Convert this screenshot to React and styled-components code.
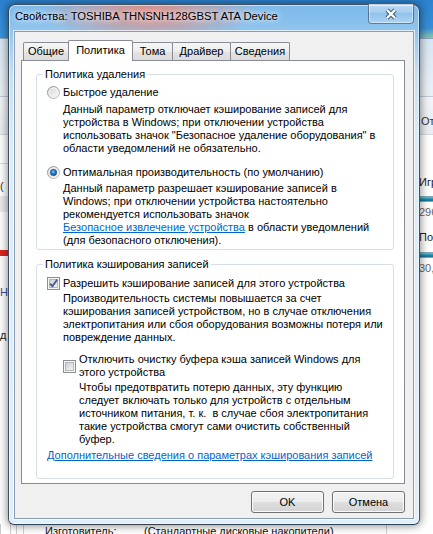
import { useId } from "react";
import styled, { createGlobalStyle } from "styled-components";

const GlobalStyle = createGlobalStyle`
  * { box-sizing: border-box; }
  html, body { margin: 0; padding: 0; background: #fff; }
  body {
    font-family: "Liberation Sans", Arial, sans-serif;
    font-size: 11px;
    color: #000;
    overflow: hidden;
  }
`;

const Desktop = styled.div`
  position: relative;
  width: 433px;
  height: 534px;
  overflow: hidden;
  background: #fff;
`;

/* ---------- window behind the dialog ---------- */

const BackWindow = styled.div`
  position: absolute;
  inset: 0;
  display: flex;
  flex-direction: column;
  background: #fff;
`;

const BackSky = styled.div`
  height: 38px;
  background:
    radial-gradient(ellipse 30px 10px at 100% 100%, #8cc7a4, rgba(140, 199, 164, 0)),
    linear-gradient(#2b82cf, #3b93da);
`;

const BackToolbar = styled.div`
  height: 59px;
  border-top: 1px solid #8aa6bf;
  border-bottom: 1px solid #c2cbd5;
  background: linear-gradient(#d6e6f2, #e4edf5 60%, #eaf0f6);
`;

const BackHeader = styled.div`
  height: 38px;
  border-bottom: 1px solid #d3d8de;
  background: linear-gradient(#f3f5f7, #e9edf1);
  padding: 18px 0 0 421px;
  color: #333;
`;

const BackBody = styled.div`
  flex: 1;
  position: relative;
`;

const SideList = styled.div`
  position: absolute;
  left: 419px;
  top: 41px;
  width: 40px;
  display: flex;
  flex-direction: column;
  line-height: 13px;
  color: #222;
`;

const SideText = styled.div`
  margin-top: ${(p) => p.$mt || 0}px;
  white-space: nowrap;
  color: ${(p) => (p.$muted ? "#666" : "#222")};
`;

const SideBar = styled.div`
  margin: ${(p) => p.$mt}px 0 0 -6px;
  height: 6px;
  border: 1px solid #7fa9b8;
  background: linear-gradient(#5fc0d6, #1d87a6 60%, #18708b);
`;

const LeftMarks = styled.div`
  position: absolute;
  left: 0;
  top: 28px;
  width: 8px;
  display: flex;
  flex-direction: column;
`;

const LeftLine = styled.div`
  margin-top: ${(p) => p.$mt}px;
  height: ${(p) => p.$h || 1}px;
  background: ${(p) => p.$c};
`;

const LeftChar = styled.div`
  margin-top: ${(p) => p.$mt}px;
  line-height: 13px;
  color: ${(p) => p.$c};
`;

const BackFooter = styled.div`
  position: absolute;
  left: 0;
  right: 0;
  bottom: 0;
  height: 10px;
  display: flex;
  align-items: flex-start;
  border-left: 1px solid #c9c9c9;
`;

const FooterRule = styled.div`
  width: ${(p) => p.$w}px;
  height: 10px;
  flex: none;
  border-right: 1px solid #cfcfcf;
`;

const FooterText = styled.div`
  width: ${(p) => p.$w}px;
  flex: none;
  padding: 1px 0 0 ${(p) => p.$pl || 0}px;
  line-height: 13px;
  white-space: nowrap;
  color: #111;
`;

/* ---------- dialog frame ---------- */

const Dialog = styled.div`
  position: absolute;
  left: 8px;
  top: 4px;
  width: 412px;
  height: 521px;
  display: flex;
  flex-direction: column;
  border: 1px solid rgba(22, 34, 50, 0.78);
  border-radius: 7px 7px 6px 6px;
  background:
    radial-gradient(ellipse 110px 28px at 140px 8px, rgba(234, 132, 114, 0.95), rgba(234, 132, 114, 0)),
    linear-gradient(180deg, #7cb9ea 0px, #90c5ee 26px, #c6e1f6 70px, #dbecf9 140px, #e1effa 100%);
  box-shadow:
    inset 0 0 0 1px rgba(255, 255, 255, 0.55),
    0 0 8px 1px rgba(0, 0, 0, 0.45);
`;

const TitleBar = styled.div`
  height: 26px;
  flex: none;
  display: flex;
  align-items: flex-start;
  justify-content: space-between;
  padding: 0 5px 0 6px;
`;

const Title = styled.div`
  padding-top: 5px;
  font-size: 11.25px;
  line-height: 13px;
  white-space: nowrap;
  text-shadow: 0 0 5px #fff, 0 0 9px rgba(255, 255, 255, 0.9);
`;

const CloseButton = styled.div`
  width: 46px;
  height: 20px;
  margin-top: -1px;
  display: flex;
  align-items: center;
  justify-content: center;
  border: 1px solid rgba(38, 58, 84, 0.6);
  border-top: none;
  border-radius: 0 0 4px 4px;
  background: linear-gradient(
    rgba(255, 255, 255, 0.5),
    rgba(255, 255, 255, 0.25) 50%,
    rgba(255, 255, 255, 0.1) 50%,
    rgba(255, 255, 255, 0.3)
  );
  box-shadow: inset 0 0 0 1px rgba(255, 255, 255, 0.45);
`;

const Client = styled.div`
  flex: 1;
  margin: 0 5px 5px;
  display: flex;
  flex-direction: column;
  padding: 8px 8px 0 6px;
  background: #f0f0f0;
  border: 1px solid #8b9db2;
  box-shadow: 0 0 0 1px rgba(255, 255, 255, 0.7);
`;

/* ---------- tabs ---------- */

const TabStrip = styled.div`
  height: 20px;
  flex: none;
  display: flex;
  align-items: flex-end;
  padding-left: 2px;
`;

const Tab = styled.div`
  position: relative;
  z-index: ${(p) => (p.$active ? 2 : 1)};
  width: ${(p) => p.$w}px;
  height: ${(p) => (p.$active ? 21 : 18)}px;
  margin-bottom: ${(p) => (p.$active ? -1 : 0)}px;
  display: flex;
  align-items: center;
  justify-content: center;
  padding-bottom: ${(p) => (p.$active ? 1 : 0)}px;
  line-height: 13px;
  white-space: nowrap;
  border: 1px solid #898c95;
  border-bottom: none;
  border-radius: 2px 2px 0 0;
  background: ${(p) =>
    p.$active
      ? "#fff"
      : "linear-gradient(#f6f6f6, #ededed 50%, #e3e3e3 50%, #dcdcdc)"};

  & + & {
    margin-left: -1px;
  }
`;

const Panel = styled.div`
  height: 424px;
  flex: none;
  display: flex;
  flex-direction: column;
  padding: 0 10px 0 14px;
  background: #fff;
  border: 1px solid #898c95;
`;

/* ---------- group boxes ---------- */

const GroupBox = styled.fieldset`
  margin: ${(p) => p.$mt}px 0 0;
  padding: 0;
  min-width: 0;
  border: 1px solid #d5dfe5;
  border-radius: 3px;
`;

const Legend = styled.legend`
  margin-left: 6px;
  padding: 0 2px;
  line-height: 13px;
`;

const GroupBody = styled.div`
  display: flex;
  flex-direction: column;
  padding: ${(p) => p.$pt}px 8px ${(p) => p.$pb}px 10px;
  line-height: 13px;
`;

const Option = styled.div`
  display: flex;
  align-items: ${(p) => (p.$multi ? "center" : "flex-start")};
  gap: 3px;
  margin: ${(p) => p.$mt || 0}px 0 0 ${(p) => p.$indent || 0}px;
`;

const Control = styled.svg`
  flex: none;
  display: block;
`;

const Description = styled.div`
  margin-top: ${(p) => p.$mt}px;
  padding-left: ${(p) => p.$indent}px;
`;

const Line = styled.div`
  white-space: pre;
`;

const Link = styled.span`
  color: #0066cc;
  text-decoration: underline;
  cursor: pointer;
`;

const LinkRow = styled.div`
  margin-top: ${(p) => p.$mt}px;
  white-space: nowrap;
`;

/* ---------- buttons ---------- */

const ButtonRow = styled.div`
  display: flex;
  justify-content: flex-end;
  gap: 8px;
  margin-top: 7px;
`;

const Button = styled.button`
  width: 73px;
  height: 22px;
  padding: 0;
  font: inherit;
  color: #000;
  border: 1px solid #707070;
  border-radius: 3px;
  background: linear-gradient(#f3f3f3, #ececec 50%, #dfdfdf 50%, #d3d3d3);
  box-shadow: inset 0 0 0 1px #fbfbfb;
`;

function Radio({ checked }) {
  const id = useId().replace(/:/g, "");
  return (
    <Control width="13" height="13" viewBox="0 0 13 13">
      <defs>
        <linearGradient id={`ring${id}`} x1="0" y1="0" x2="1" y2="1">
          <stop offset="0" stopColor="#8b8b8b" />
          <stop offset="1" stopColor="#c4c4c4" />
        </linearGradient>
        <linearGradient id={`fill${id}`} x1="0" y1="0" x2="1" y2="1">
          <stop offset="0" stopColor="#d4d4d4" />
          <stop offset="1" stopColor="#fcfcfc" />
        </linearGradient>
        <radialGradient id={`dot${id}`} cx="0.45" cy="0.4" r="0.65">
          <stop offset="0" stopColor="#7ed2f5" />
          <stop offset="0.45" stopColor="#2a7fc8" />
          <stop offset="1" stopColor="#123f78" />
        </radialGradient>
      </defs>
      <circle cx="6.5" cy="6.5" r="6" fill={`url(#fill${id})`} stroke={`url(#ring${id})`} />
      <circle cx="6.5" cy="6.5" r="4.5" fill="none" stroke="#f4f4f4" strokeWidth="1" />
      {checked && (
        <circle cx="6.5" cy="6.5" r="3.2" fill={`url(#dot${id})`} stroke="#1c4c86" strokeWidth="0.6" />
      )}
    </Control>
  );
}

function CheckBox({ checked }) {
  const id = useId().replace(/:/g, "");
  return (
    <Control width="13" height="13" viewBox="0 0 13 13">
      <defs>
        <linearGradient id={`cb${id}`} x1="0" y1="0" x2="1" y2="1">
          <stop offset="0" stopColor="#c9cdd2" />
          <stop offset="1" stopColor="#f7f7f7" />
        </linearGradient>
      </defs>
      <rect x="0.5" y="0.5" width="12" height="12" fill="#f6f6f6" stroke="#8e8f8f" />
      <rect x="2.5" y="2.5" width="8" height="8" fill={`url(#cb${id})`} stroke="#b4b8bd" />
      {checked && (
        <path d="M3 6.6 L5.4 9.2 L10.2 2.6" fill="none" stroke="#4a5d92" strokeWidth="1.9" />
      )}
    </Control>
  );
}

function CloseGlyph() {
  return (
    <svg width="14" height="12" viewBox="0 0 14 12">
      <path d="M3 2 L11 10 M11 2 L3 10" stroke="rgba(40,52,66,0.75)" strokeWidth="4.4" />
      <path d="M3 2 L11 10 M11 2 L3 10" stroke="#fff" strokeWidth="2.4" />
    </svg>
  );
}

const tabs = [
  { name: "Общие", w: 46 },
  { name: "Политика", w: 65, active: true },
  { name: "Тома", w: 41 },
  { name: "Драйвер", w: 59 },
  { name: "Сведения", w: 60 },
];

const quickLines = [
  "Данный параметр отключает кэширование записей для",
  "устройства в Windows; при отключении устройства",
  'использовать значок "Безопасное удаление оборудования" в',
  "области уведомлений не обязательно.",
];

const cacheLines = [
  "Производительность системы повышается за счет",
  "кэширования записей устройством, но в случае отключения",
  "электропитания или сбоя оборудования возможны потеря или",
  "повреждение данных.",
];

const flushLines = [
  "Чтобы предотвратить потерю данных, эту функцию",
  "следует включать только для устройств с отдельным",
  "источником питания, т. к.  в случае сбоя электропитания",
  "такие устройства смогут сами очистить собственный",
  "буфер.",
];

export default function App() {
  return (
    <Desktop>
      <GlobalStyle />

      <BackWindow>
        <BackSky />
        <BackToolbar />
        <BackHeader>От</BackHeader>
        <BackBody>
          <SideList>
            <SideText>Игр</SideText>
            <SideBar $mt={7} />
            <SideText $mt={4} $muted>296</SideText>
            <SideText $mt={12}>По</SideText>
            <SideBar $mt={8} />
            <SideText $mt={4} $muted>30,9</SideText>
          </SideList>
          <LeftMarks>
            <LeftLine $mt={0} $c="#dcdcdc" />
            <LeftChar $mt={16} $c="#333">(</LeftChar>
            <LeftLine $mt={3} $h={16} $c="#ececec" />
            <LeftLine $mt={38} $h={6} $c="#e0231f" />
            <LeftChar $mt={30} $c="#2a4fa8">Н</LeftChar>
            <LeftChar $mt={30} $c="#222">д</LeftChar>
          </LeftMarks>
          <BackFooter>
            <FooterRule $w={10} />
            <FooterRule $w={6} />
            <FooterRule $w={7} />
            <FooterText $w={120} $pl={21}>Изготовитель:</FooterText>
            <FooterText $w={236}>(Стандартные дисковые накопители)</FooterText>
            <FooterRule $w={7} />
          </BackFooter>
        </BackBody>
      </BackWindow>

      <Dialog>
        <TitleBar>
          <Title>Свойства: TOSHIBA THNSNH128GBST ATA Device</Title>
          <CloseButton>
            <CloseGlyph />
          </CloseButton>
        </TitleBar>

        <Client>
          <TabStrip>
            {tabs.map((t) => (
              <Tab key={t.name} $w={t.w} $active={t.active}>
                {t.name}
              </Tab>
            ))}
          </TabStrip>

          <Panel>
            <GroupBox $mt={7}>
              <Legend>Политика удаления</Legend>
              <GroupBody $pt={5} $pb={2}>
                <Option>
                  <Radio />
                  <span>Быстрое удаление</span>
                </Option>
                <Description $mt={4} $indent={16}>
                  {quickLines.map((l) => (
                    <Line key={l}>{l}</Line>
                  ))}
                </Description>

                <Option $mt={11}>
                  <Radio checked />
                  <span>Оптимальная производительность (по умолчанию)</span>
                </Option>
                <Description $mt={3} $indent={16}>
                  <Line>Данный параметр разрешает кэширование записей в</Line>
                  <Line>Windows; при отключении устройства настоятельно</Line>
                  <Line>рекомендуется использовать значок</Line>
                  <Line>
                    <Link>Безопасное извлечение устройства</Link> в области уведомлений
                  </Line>
                  <Line>(для безопасного отключения).</Line>
                </Description>
              </GroupBody>
            </GroupBox>

            <GroupBox $mt={8}>
              <Legend>Политика кэширования записей</Legend>
              <GroupBody $pt={6} $pb={16}>
                <Option>
                  <CheckBox checked />
                  <span>Разрешить кэширование записей для этого устройства</span>
                </Option>
                <Description $mt={2} $indent={16}>
                  {cacheLines.map((l) => (
                    <Line key={l}>{l}</Line>
                  ))}
                </Description>

                <Option $mt={9} $indent={16} $multi>
                  <CheckBox />
                  <div>
                    <Line>Отключить очистку буфера кэша записей Windows для</Line>
                    <Line>этого устройства</Line>
                  </div>
                </Option>
                <Description $mt={2} $indent={32}>
                  {flushLines.map((l) => (
                    <Line key={l}>{l}</Line>
                  ))}
                </Description>

                <LinkRow $mt={3}>
                  <Link>Дополнительные сведения о параметрах кэширования записей</Link>
                </LinkRow>
              </GroupBody>
            </GroupBox>
          </Panel>

          <ButtonRow>
            <Button>OK</Button>
            <Button>Отмена</Button>
          </ButtonRow>
        </Client>
      </Dialog>
    </Desktop>
  );
}
